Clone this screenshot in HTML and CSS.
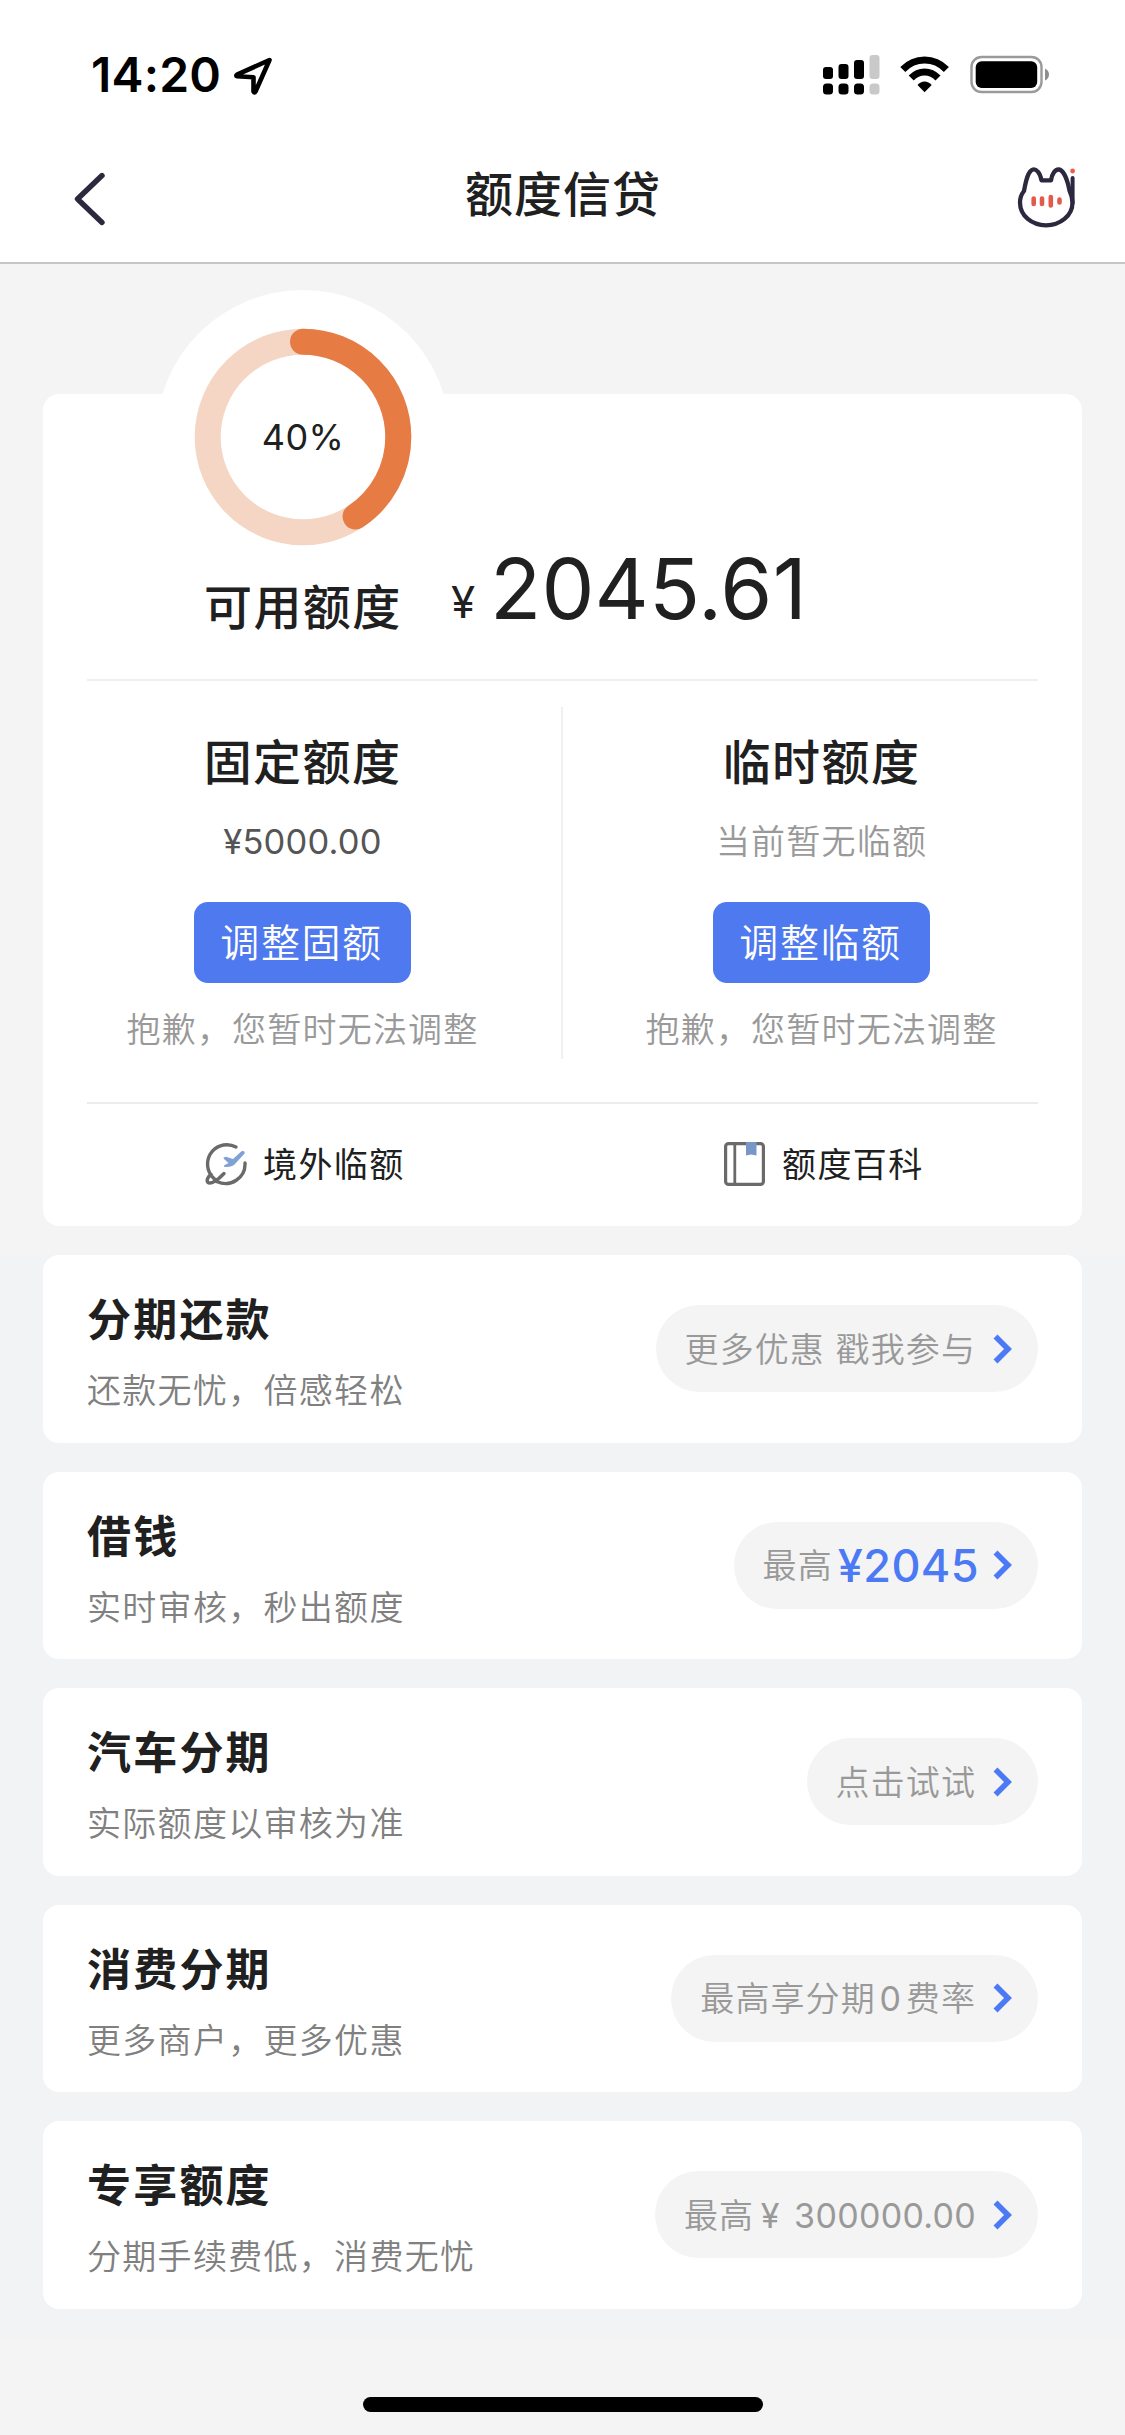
FILE: index.html
```html
<!DOCTYPE html>
<html lang="zh-CN">
<head>
<meta charset="utf-8">
<title>额度信贷</title>
<link rel="stylesheet" href="styles.css">
</head>
<body>
<header class="header">
  <div class="status">
    <div class="status-left">
      <span class="clock">14:20</span>
      <svg class="locate" width="40" height="40" viewBox="0 0 40 40"><path d="M36.500 4 4 18.700Q2.500 20 4 20.300L20.500 21.200 20.500 35.500Q21.500 37.500 22.500 35.500Z" fill="none" stroke="#000" stroke-width="4.600" stroke-linejoin="round"/></svg>
    </div>
    <svg class="status-icons" width="230" height="44" viewBox="822 53 230 44">
      <g fill="#000">
        <rect x="823" y="67" width="10" height="12" rx="3"/><rect x="838.500" y="64" width="10" height="15" rx="3"/><rect x="854" y="60" width="10" height="19" rx="3"/>
        <rect x="823" y="83.500" width="10" height="11" rx="3.500"/><rect x="838.500" y="83.500" width="10" height="11" rx="3.500"/><rect x="854" y="83.500" width="10" height="11" rx="3.500"/>
      </g>
      <g fill="#c9c9c9"><rect x="869.500" y="55" width="10" height="24" rx="3"/><rect x="869.500" y="83.500" width="10" height="11" rx="3.500"/></g>
      <g fill="none" stroke="#000" stroke-width="7"><path d="M902.800 69.500Q912 60 924.600 60T946.400 69.500"/><path d="M911.200 78Q917 72 924.600 72T938 78"/></g>
      <path d="M917.500 85Q920.500 81.500 924.600 81.500T931.700 85L924.600 92.200Z"/>
      <rect x="971.500" y="57" width="70" height="35" rx="10" fill="none" stroke="#9a9a9a" stroke-width="2.400"/>
      <rect x="975.700" y="61.300" width="61.500" height="26.600" rx="6"/>
      <path d="M1045 68.500Q1049 70.500 1049 74.500T1045 80.500Z" fill="#8e8e8e"/>
    </svg>
  </div>
  <div class="nav">
    <svg class="back" width="34" height="56" viewBox="0 0 34 56"><path d="M29 4.500 4.500 28 29 51.500" fill="none" stroke="#2c293e" stroke-width="5.400" stroke-linecap="round" stroke-linejoin="round"/></svg>
    <h1 class="nav-title">额度信贷</h1>
    <svg class="cat" width="62" height="66" viewBox="1015 165 62 66">
      <path d="M1041.500 180.300C1040 172 1036 169 1033 169.500 1028 171 1026 180 1024 191Q1020 196 1020 202.500C1020 216 1032 225.300 1046 225.300S1072.500 216 1072.500 202.500Q1072.500 197 1069.500 190.500C1067 178 1063 169.500 1058.500 169.500 1055 169.500 1052 174 1051 180.300Z" fill="none" stroke="#2c293e" stroke-width="4.300" stroke-linejoin="round"/>
      <path d="M1072.600 178V203" stroke="#2c293e" stroke-width="4" stroke-linecap="round"/>
      <circle cx="1072.600" cy="171" r="2.400" fill="#ee5b4f"/>
      <g stroke="#e25a4b" stroke-width="4.600" stroke-linecap="round"><path d="M1033.700 198.500v5.500M1042 198.500v5.500M1050.800 197v8.500M1059.500 199.500v3"/></g>
    </svg>
  </div>
</header>

<main class="page">
  <section class="card credit">
    <div class="dial">
      <svg width="294" height="294" viewBox="-147 -147 294 294">
        <circle r="147" fill="#fff"/>
        <circle r="95.300" fill="none" stroke="#f5d6c4" stroke-width="26"/>
        <circle r="95.300" fill="none" stroke="#e67b43" stroke-width="26" stroke-linecap="round" pathLength="100" stroke-dasharray="40.700 100" transform="rotate(-90)"/>
      </svg>
      <span class="dial-value">40%</span>
    </div>
    <div class="available">
      <h2 class="heading">可用额度</h2>
      <span class="currency">¥</span><span class="amount">2045.61</span>
    </div>
    <div class="limits">
      <div class="limit">
        <h2 class="heading">固定额度</h2>
        <p class="limit-value">¥5000.00</p>
        <button class="adjust">调整固额</button>
        <p class="limit-note">抱歉，您暂时无法调整</p>
      </div>
      <div class="limit">
        <h2 class="heading">临时额度</h2>
        <p class="limit-value none">当前暂无临额</p>
        <button class="adjust">调整临额</button>
        <p class="limit-note">抱歉，您暂时无法调整</p>
      </div>
    </div>
    <div class="links">
      <div class="link">
        <svg width="44" height="46" viewBox="0 0 44 46"><g fill="none" stroke="#6a6a6a" stroke-width="3.400" stroke-linecap="round" stroke-linejoin="round"><path d="M32 6A19.300 19.300 0 0 0 7 34"/><path d="M41 22A19.500 19.500 0 0 1 13 40.500"/><path d="M7 33.500C4 35.500 2 39.500 4 41.500 7 43.500 14 39 20 32.500"/><path d="M6.500 34 13 40.500"/></g><path d="M19.500 16.500 22 15.800 29 18 37.500 10.200Q41.200 9 40.600 12.500L30.500 23.500Q27.500 26.500 20 25.800L20 24.500 24.500 22 20 18Z" fill="#7fa1d3"/></svg>
        <span>境外临额</span>
      </div>
      <div class="link">
        <svg width="44" height="46" viewBox="0 0 44 46"><rect x="2.600" y="2.600" width="37.800" height="40.800" rx="3" fill="none" stroke="#6a6a6a" stroke-width="3.200"/><path d="M11.800 3V43" stroke="#6a6a6a" stroke-width="2.800"/><path d="M23 1H33.500V14.500L28.200 13.500 23 14.500Z" fill="#7897c8"/></svg>
        <span>额度百科</span>
      </div>
    </div>
  </section>

  <div class="products">
    <section class="card product">
      <div><h3 class="name">分期还款</h3><p class="desc">还款无忧，倍感轻松</p></div>
      <div class="pill"><span class="pill-text">更多优惠 戳我参与</span><svg class="go" width="19" height="30" viewBox="0 0 19 30"><path d="M2.500 2.500 15 15 2.500 27.500"/></svg></div>
    </section>
    <section class="card product">
      <div><h3 class="name">借钱</h3><p class="desc">实时审核，秒出额度</p></div>
      <div class="pill"><span class="pill-text">最高</span><strong class="pill-amount">¥2045</strong><svg class="go" width="19" height="30" viewBox="0 0 19 30"><path d="M2.500 2.500 15 15 2.500 27.500"/></svg></div>
    </section>
    <section class="card product">
      <div><h3 class="name">汽车分期</h3><p class="desc">实际额度以审核为准</p></div>
      <div class="pill"><span class="pill-text">点击试试</span><svg class="go" width="19" height="30" viewBox="0 0 19 30"><path d="M2.500 2.500 15 15 2.500 27.500"/></svg></div>
    </section>
    <section class="card product">
      <div><h3 class="name">消费分期</h3><p class="desc">更多商户，更多优惠</p></div>
      <div class="pill"><span class="pill-text">最高享分期<span class="wide">0</span>费率</span><svg class="go" width="19" height="30" viewBox="0 0 19 30"><path d="M2.500 2.500 15 15 2.500 27.500"/></svg></div>
    </section>
    <section class="card product">
      <div><h3 class="name">专享额度</h3><p class="desc">分期手续费低，消费无忧</p></div>
      <div class="pill"><span class="pill-text">最高<span class="wide yen">¥</span><span class="digits"> 300000.00</span></span><svg class="go" width="19" height="30" viewBox="0 0 19 30"><path d="M2.500 2.500 15 15 2.500 27.500"/></svg></div>
    </section>
  </div>
</main>
<footer class="footer"><div class="home-bar"></div></footer>
</body>
</html>
```
FILE: styles.css
```css
* { box-sizing: border-box; margin: 0; padding: 0; }
body {
  width: 1125px;
  height: 2435px;
  display: flex;
  flex-direction: column;
  background: #f4f4f4;
  font-family: Inter, "Noto Sans CJK SC", sans-serif;
  color: #202020;
  overflow: hidden;
}
svg { display: block; flex: none; }
.header { height: 264px; flex: none; background: #fff; border-bottom: 2px solid #c5c6c6; }
.status { height: 150px; padding: 53px 73px 0 91px; display: flex; justify-content: space-between; align-items: flex-start; }
.status-left { display: flex; gap: 13px; }
.clock { font-size: 48px; line-height: 44px; font-weight: 600; color: #000; width: 129px; white-space: nowrap; letter-spacing: 0.2px; }
.locate { margin-top: 3px; }
.nav { height: 112px; padding: 15px 48px 0 73px; display: flex; justify-content: space-between; align-items: flex-start; }
.back { margin-top: 6px; }
.nav-title { font-size: 48px; line-height: 60px; font-weight: 500; letter-spacing: 1px; margin-left: 4px; }

.page { padding: 130px 43px 0; flex: none; }
.card { background: #fff; border-radius: 16px; }
.credit { height: 832px; padding: 0 44px; position: relative; }
.dial { position: absolute; left: 113px; top: -104px; width: 294px; height: 294px; }
.dial-value { position: absolute; inset: 0; display: flex; align-items: center; justify-content: center; font-size: 36px; letter-spacing: 0.4px; }
.heading { font-size: 48px; line-height: 60px; font-weight: 500; letter-spacing: 1.4px; }
.available { height: 287px; border-bottom: 2px solid #f0f0f0; padding: 153px 0 0 117px; display: flex; align-items: flex-start; }
.available .heading { width: 247px; margin-top: 31px; }
.currency { font-size: 44px; line-height: 54px; width: 41px; margin-top: 28px; }
.amount { font-size: 84px; line-height: 84px; margin-left: -2px; letter-spacing: 0.2px; }
.limits { height: 423px; display: flex; padding: 26px 0 43px; border-bottom: 2px solid #ececec; }
.limit { flex: 1; display: flex; flex-direction: column; align-items: center; padding-top: 26px; }
.limit:first-child { flex: 0 0 476px; border-right: 2px solid #f0f0f0; padding-right: 43px; }
.limit:last-child { padding-right: 0; padding-left: 42px; }
.limit-value { font-size: 34.500px; line-height: 48px; color: #555; margin-top: 25px; letter-spacing: 0.2px; }
.limit-value.none { color: #999; font-size: 34px; letter-spacing: 1.2px; font-weight: 350; }
.adjust { width: 217px; height: 81px; border: 0; border-radius: 14px; background: #4f79ee; color: #fff; font: inherit; font-size: 39px; font-weight: 350; letter-spacing: 1.6px; margin-top: 36px; padding: 0 2px 6px 0; }
.limit-note { font-size: 34px; line-height: 48px; color: #999; letter-spacing: 1.2px; margin-top: 23px; font-weight: 350; }
.links { display: flex; height: 120px; align-items: center; }
.link { width: 519px; padding-left: 117px; display: flex; gap: 15px; align-items: center; font-size: 34px; letter-spacing: 1.4px; flex: none; }
.link span { margin-top: -4px; }

.products { margin: 29px -43px 0; padding: 0 43px 29px; background: #f2f3f5; display: grid; gap: 29px; }
.product { height: 187.500px; padding: 36px 44px 0; display: flex; justify-content: space-between; align-items: flex-start; }
.name { font-size: 44px; line-height: 58px; font-weight: 600; letter-spacing: 2.2px; }
.desc { font-size: 34px; line-height: 48px; color: #808080; letter-spacing: 1.3px; margin-top: 18px; font-weight: 350; }
.pill { height: 87px; margin-top: 14px; border-radius: 44px; background: #f4f4f4; padding: 0 26px 0 29px; display: flex; align-items: center; font-size: 34px; letter-spacing: 1.1px; color: #999; font-weight: 350; }
.pill-text { margin-top: -3px; }
.pill-amount { font-size: 45px; font-weight: 500; color: #4b7af4; letter-spacing: 0.4px; margin: 0 -3px 0 5px; }
.go { margin-left: 17px; fill: none; stroke: #4b7af4; stroke-width: 5.600; }
.wide { display: inline-block; width: 30px; text-align: center; font-weight: 400; }
.yen { padding-left: 3px; }
.digits { letter-spacing: 0.3px; font-weight: 400; }
.footer { flex: 1; display: flex; justify-content: center; align-items: flex-end; padding-bottom: 23px; }
.home-bar { width: 400px; height: 15px; border-radius: 8px; background: #000; }
```
